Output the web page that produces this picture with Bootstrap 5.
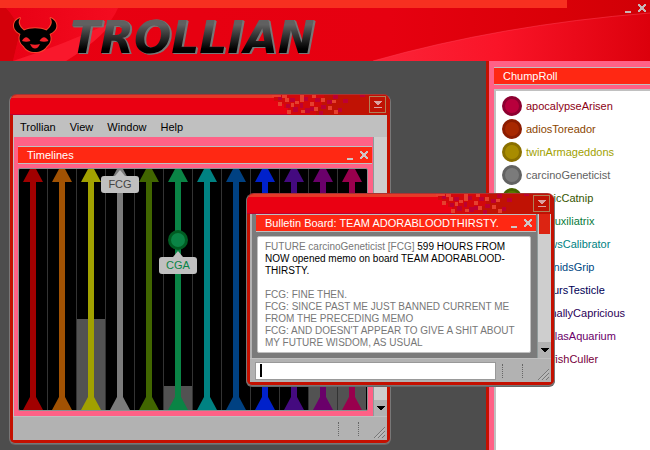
<!DOCTYPE html>
<html lang="en">
<head>
<meta charset="utf-8">
<meta name="viewport" content="width=device-width, initial-scale=1">
<title>Trollian</title>
<link rel="stylesheet" href="https://cdn.jsdelivr.net/npm/bootstrap@5.3.0/dist/css/bootstrap.min.css">
<style>
:root { --line: #c0c0c0; --face: #b2b2b2; --pink: #ff6186; --hot: #ff2813; --frame: #c41000; }
body { font: 11px/16px "Liberation Sans", Arial, sans-serif; background: #4d4d4d; color: #000; }
button { border: 0; padding: 0; background: none; color: inherit; line-height: 0; }
svg { display: block; }

.masthead { height: 61px; background: #e60010; border-bottom-right-radius: 6px; z-index: 1; }
.backdrop { inset: 0; width: 100%; height: 100%; }
.logo-text { font: italic bold 44px/44px "DejaVu Sans", sans-serif; color: transparent;
  background: linear-gradient(#606060 20%, #333 45%, #000 75%); -webkit-background-clip: text; background-clip: text;
  filter: drop-shadow(1px 0 0 #777) drop-shadow(1px 1px 0 #777); }
.masthead-btns { color: #c9b5b5; padding: 3px 3px 0 0; }

.roster { width: 164px; background: var(--pink); border-left: 3px solid var(--frame); padding: 6px 0 0 5px; }
.roster-list { margin-top: 4px; background: #fff; border: solid var(--line); border-width: 2px 0 0 2px; padding: 3px 0 0 6px; }
.chum { height: 23px; gap: 4px; color: var(--t); text-decoration: none; }
.chum::before { content: ""; flex: none; width: 20px; height: 20px; border-radius: 50%; background: var(--d); border: 3px solid var(--e); }

.strip { height: 18px; background: var(--hot); border: solid var(--line); border-width: 1px 0; color: #fff; padding: 0 3px 0 9px; }
.strip-btns { color: #d0c4c4; }

.win { border: 1px solid #777; border-top-color: #a33; border-radius: 8px 8px 6px 6px; background: var(--frame); padding: 0 3px 3px; overflow: hidden; box-shadow: 0 1px #666; }
.win-main { left: 9px; top: 33px; width: 382px; }
.win-memo { left: 246px; top: 132px; width: 309px; }
.win-bar { height: 20px; margin: 0 -3px; background: linear-gradient(#e63a28 3px, #ea0012 3px, #ea0012 19px, #c00030 19px); }
.win-tail { height: 20px; }
.win-toggle { right: 4px; top: 1px; width: 17px; height: 17px; border: 1px solid #b08058; color: #dba0a0; }

.menu-row { height: 22px; gap: 14px; padding: 0 7px; background: var(--line); }
.menu-row a { color: #000; text-decoration: none; line-height: 24px; }
.pane { padding: 9px 1px 5px 4px; background: var(--pink); border-left: 1px solid var(--line); }
.lanes { height: 243px; margin: 4px 4px 0 0; background: #000; border: 1px solid #8b9090; border-radius: 2px; }
.lane { border-right: 1px solid #333; background:
  linear-gradient(var(--c), var(--c)) center / 6px 100% no-repeat,
  linear-gradient(#525252, #525252) bottom / 100% var(--fill, 0) no-repeat; }
.lane:last-child { border-color: transparent; }
.lane::before, .lane::after { content: ""; width: 20px; height: 13px; background: var(--c); clip-path: polygon(35% 0, 65% 0, 100% 100%, 0 100%); }
.flag { left: 50%; width: 38px; height: 17px; margin-left: -19px; line-height: 17px; text-align: center; background: var(--line); border-radius: 3px; z-index: 1; }
.flag::before { content: ""; position: absolute; left: 14px; top: -6px; border: solid transparent; border-width: 0 5px 6px; border-bottom-color: var(--line); }
.knob { left: 50%; width: 20px; height: 20px; margin-left: -10px; border-radius: 50%; background: #0a8445; border: 3px solid #005c22; }

.scroller { width: 14px; background: #cecece; border-left: 1px solid #8f9a9a; }
.scroller button { height: 16px; background: var(--face); }
.scroller i { height: 20px; margin: 0 1px; background: #dc2412; }
.status { height: 24px; background: var(--face); border-top: 1px solid var(--line); padding: 2px 2px 2px 5px; gap: 19px; }
.grip { margin-left: -4px; }
.dots { height: 14px; border-left: 1px dotted #666; }
.memo-pane { background: #7b7b7b; padding: 0 1px 5px 4px; border-left: 2px solid var(--face); min-width: 0; }
.memo-text { margin: 4px 5px 0 1px; background: #fff; border: 1px solid var(--line); border-radius: 2px; padding: 4px 10px 3px 7px; color: #777; font-size: 10px; line-height: 12px; }
.memo-in { font-size: 11px; height: 18px; border: 1px solid #999; background: #fff; padding: 0 4px; margin-right: -13px; min-width: 0; }
.caret-mark { left: 10px; top: 5px; width: 2px; height: 13px; background: #000; }
</style>
<script src="https://cdn.jsdelivr.net/npm/bootstrap@5.3.0/dist/js/bootstrap.bundle.min.js"></script>
</head>
<body class="vh-100 overflow-hidden d-flex flex-column">

<svg width="0" height="0" class="position-absolute" aria-hidden="true">
  <symbol id="i-min" viewBox="0 0 10 10"><path d="M2 8h6v2H2z" fill="currentColor"/></symbol>
  <symbol id="i-close" viewBox="0 0 10 10"><path d="M1 1h2v1h1v1h2V2h1V1h2v2H8v1H7v2h1v1h1v2H7V8H6V7H4v1H3v1H1V7h1V6h1V4H2V3H1z" fill="currentColor"/></symbol>
  <symbol id="i-roll" viewBox="0 0 15 15"><path d="M4 4h8v1h-1v1h-1v1H9v1H7V7H6V6H5V5H4zM4 10h8v1H4z" fill="currentColor"/></symbol>
  <symbol id="i-down" viewBox="0 0 10 10"><path d="M1 3h8v1H8v1H7v1H6v1H4V6H3V5H2V4H1z" fill="#000"/></symbol>
  <symbol id="i-grip" viewBox="0 0 11 11"><path d="M0 11 11 0M4 11l7-7M8 11l3-3" stroke="#777" fill="none"/><path d="M1 11.500 11.500 1M5 11.500 11.500 5" stroke="#ccc" stroke-width=".6" fill="none"/></symbol>
  <symbol id="pixels" viewBox="0 0 126 20">
    <path d="M12 0H126V20H24V13h-4V9h-6V6h-4V2h2z" fill="#d3080b"/>
    <path d="M60 0H126V20H52V12h6V6h-4V3h6z" fill="#c01204"/>
    <path d="M14 2h4v3h-4zM26 3h5v4h-5zM22 9h4v4h-4zM29 12h5v5h-5zM36 8h3v5h-3zM40 2h4v4h-4zM41 13h5v5h-5zM51 3h5v4h-5zM46 12h4v4h-4zM57 10h5v4h-5zM63 5h5v4h-5zM69 0h5v4h-5zM55 16h4v4h-4zM74 13h4v4h-4zM79 4h5v4h-5zM96 0h5v2h-5z" fill="#bd0033"/>
    <path d="M8 0h9v2H8zM18 0h5v3h-5zM21 3h4v4h-4zM14 7h4v4h-4zM27 8h3v4h-3zM23 15h4v4h-4zM31 6h4v3h-4zM36 0h4v7h-4zM37 15h4v3h-4zM46 7h4v4h-4zM48 0h4v3h-4zM50 12h4v4h-4zM57 3h4v4h-4zM64 11h4v4h-4zM68 5h4v3h-4zM70 15h4v4h-4z" fill="#e6402e"/>
  </symbol>
</svg>

<header class="masthead position-relative d-flex justify-content-between align-items-start flex-shrink-0">
  <svg class="backdrop position-absolute" viewBox="0 0 650 61" preserveAspectRatio="none" aria-hidden="true">
    <defs>
      <linearGradient id="base"><stop offset="0" stop-color="#e80012"/><stop offset=".6" stop-color="#e60010"/><stop offset=".85" stop-color="#da0008"/><stop offset="1" stop-color="#d00006"/></linearGradient>
      <linearGradient id="sweep"><stop offset="0" stop-color="#fb2438"/><stop offset=".45" stop-color="#fa1428"/><stop offset="1" stop-color="#dc000c"/></linearGradient>
      <linearGradient id="glow"><stop offset="0" stop-color="#e80014"/><stop offset="1" stop-color="#f40c20"/></linearGradient>
    </defs>
    <path d="M0 0H650V61H0z" fill="url(#base)"/>
    <path d="M0 8H6Q16 18 20 32L13 61H0z" fill="#d4000a"/>
    <path d="M6 8H118Q108 32 66 61H13L20 32Q16 18 6 8z" fill="url(#glow)"/>
    <path d="M13 61Q65 44 112 22Q100 40 66 61z" fill="#f9182c"/>
    <path d="M373 61Q500 25 650 13V61z" fill="url(#sweep)"/>
    <path d="M373 61Q500 25 650 13" fill="none" stroke="#ff4055" stroke-opacity=".5"/>
    <path d="M0 0H567V8H0z" fill="#f73020"/>
  </svg>
  <div class="position-relative d-flex align-items-center ps-2 pt-3">
    <svg width="54" height="44" viewBox="8 16 54 44" role="img" aria-label="Troll mask">
      <path d="M20 18C14 20 12.500 26 15.500 30C17 32.500 19 33 20.500 34C18.500 38 19.500 43 24 46.500C26 50 30 52 35 52C40 52 44.500 50 46.500 46.500C51 43 51.500 38 49.500 34C51.500 33 53.500 32 55 30C58 26 56 20 50.500 18C53 22 52 26 46.500 30.500C40 27.500 30 27.500 24 30.500C18.500 26 17.500 22 20 18z" fill="#000" stroke="#f8452f" stroke-width="2" paint-order="stroke" stroke-linejoin="round"/>
      <path d="M22 41Q26 33.500 30.500 41Q26 42.500 22 41zM39.500 41Q44 33.500 48.500 41Q44 42.500 39.500 41zM30 44Q35 45.500 40 44Q38 48.500 35 48.500Q32 48.500 30 44z" fill="#f02028"/>
    </svg>
    <span class="logo-text ms-2">TROLLIAN</span>
  </div>
  <div class="masthead-btns position-relative d-flex gap-1">
    <button aria-label="Minimize"><svg width="10" height="10"><use href="#i-min"/></svg></button>
    <button aria-label="Close"><svg width="10" height="10"><use href="#i-close"/></svg></button>
  </div>
</header>

<main class="d-flex flex-fill position-relative">
  <section class="flex-fill" aria-label="Desktop">

    <article class="win win-main position-absolute">
      <div class="win-bar position-relative d-flex justify-content-end">
        <svg class="win-tail" width="126" height="20"><use href="#pixels"/></svg>
        <button class="win-toggle position-absolute" aria-label="Roll up"><svg width="15" height="15"><use href="#i-roll"/></svg></button>
      </div>
      <nav class="menu-row d-flex">
        <a href="#">Trollian</a><a href="#">View</a><a href="#">Window</a><a href="#">Help</a>
      </nav>
      <div class="d-flex">
        <div class="pane flex-fill">
          <div class="strip d-flex justify-content-between align-items-center">
            <span>Timelines</span>
            <span class="strip-btns d-flex gap-1">
              <button aria-label="Minimize timelines"><svg width="10" height="10"><use href="#i-min"/></svg></button>
              <button aria-label="Close timelines"><svg width="10" height="10"><use href="#i-close"/></svg></button>
            </span>
          </div>
          <div class="lanes d-flex">
            <div class="lane flex-fill position-relative d-flex flex-column justify-content-between align-items-center" style="--c:#a10000"></div>
            <div class="lane flex-fill position-relative d-flex flex-column justify-content-between align-items-center" style="--c:#a15203"></div>
            <div class="lane flex-fill position-relative d-flex flex-column justify-content-between align-items-center" style="--c:#a1a100;--fill:91px"></div>
            <div class="lane flex-fill position-relative d-flex flex-column justify-content-between align-items-center" style="--c:#7b7b7b"><span class="flag position-absolute" style="top:7px;color:#444">FCG</span></div>
            <div class="lane flex-fill position-relative d-flex flex-column justify-content-between align-items-center" style="--c:#416600"></div>
            <div class="lane flex-fill position-relative d-flex flex-column justify-content-between align-items-center" style="--c:#0a8445;--fill:24px"><span class="knob position-absolute" style="top:61px"></span><span class="flag position-absolute" style="top:88px;color:#0a8445">CGA</span></div>
            <div class="lane flex-fill position-relative d-flex flex-column justify-content-between align-items-center" style="--c:#008282"></div>
            <div class="lane flex-fill position-relative d-flex flex-column justify-content-between align-items-center" style="--c:#004182"></div>
            <div class="lane flex-fill position-relative d-flex flex-column justify-content-between align-items-center" style="--c:#0021cb"></div>
            <div class="lane flex-fill position-relative d-flex flex-column justify-content-between align-items-center" style="--c:#440a7f"></div>
            <div class="lane flex-fill position-relative d-flex flex-column justify-content-between align-items-center" style="--c:#6a006a;--fill:60px"></div>
            <div class="lane flex-fill position-relative d-flex flex-column justify-content-between align-items-center" style="--c:#99004d;--fill:60px"></div>
          </div>
        </div>
        <div class="scroller flex-shrink-0 d-flex flex-column justify-content-end">
          <button aria-label="Scroll down"><svg class="mx-auto" width="10" height="10"><use href="#i-down"/></svg></button>
        </div>
      </div>
      <div class="status d-flex justify-content-end align-items-center">
        <span class="dots"></span><span class="dots"></span>
        <svg class="grip align-self-end" width="11" height="11"><use href="#i-grip"/></svg>
      </div>
    </article>

    <article class="win win-memo position-absolute">
      <div class="win-bar position-relative d-flex justify-content-end">
        <svg class="win-tail" width="126" height="20"><use href="#pixels"/></svg>
        <button class="win-toggle position-absolute" aria-label="Roll up"><svg width="15" height="15"><use href="#i-roll"/></svg></button>
      </div>
      <div class="d-flex">
        <div class="memo-pane flex-fill">
          <div class="strip d-flex justify-content-between align-items-center">
            <span class="text-nowrap">Bulletin Board: TEAM ADORABLOODTHIRSTY.</span>
            <span class="strip-btns d-flex gap-1">
              <button aria-label="Minimize memo"><svg width="10" height="10"><use href="#i-min"/></svg></button>
              <button aria-label="Close memo"><svg width="10" height="10"><use href="#i-close"/></svg></button>
            </span>
          </div>
          <div class="memo-text">
            <span>FUTURE carcinoGeneticist [FCG]</span> <span class="text-black">599 HOURS FROM</span><br>
            <span class="text-black">NOW opened memo on board TEAM ADORABLOOD-<wbr>THIRSTY.</span><br><br>
            FCG: FINE THEN.<br>
            FCG: SINCE PAST ME JUST BANNED CURRENT ME FROM THE PRECEDING MEMO<br>
            FCG: AND DOESN'T APPEAR TO GIVE A SHIT ABOUT MY FUTURE WISDOM, AS USUAL
          </div>
        </div>
        <div class="scroller flex-shrink-0 d-flex flex-column justify-content-between">
          <i></i>
          <button aria-label="Scroll memo down"><svg class="mx-auto" width="10" height="10"><use href="#i-down"/></svg></button>
        </div>
      </div>
      <div class="status position-relative d-flex align-items-center">
        <input class="memo-in flex-fill" type="text" aria-label="Message">
        <span class="caret-mark position-absolute"></span>
        <span class="dots"></span><span class="dots"></span>
        <svg class="grip align-self-end flex-shrink-0" width="11" height="11"><use href="#i-grip"/></svg>
      </div>
    </article>
  </section>

  <aside class="roster flex-shrink-0 d-flex flex-column">
    <div class="strip">ChumpRoll</div>
    <div class="roster-list flex-fill d-flex flex-column">
      <a href="#" class="chum d-flex align-items-center" style="--t:#8c0014;--d:#b8003c;--e:#8c0030">apocalypseArisen</a>
      <a href="#" class="chum d-flex align-items-center" style="--t:#8c4600;--d:#a82800;--e:#8c1c00">adiosToreador</a>
      <a href="#" class="chum d-flex align-items-center" style="--t:#a1a100;--d:#a88c00;--e:#8a7000">twinArmageddons</a>
      <a href="#" class="chum d-flex align-items-center" style="--t:#626262;--d:#7b7b7b;--e:#626262">carcinoGeneticist</a>
      <a href="#" class="chum d-flex align-items-center" style="--t:#365600;--d:#5a7a00;--e:#466200">arsenicCatnip</a>
      <a href="#" class="chum d-flex align-items-center" style="--t:#087a3c;--d:#0a8445;--e:#005c22">grimAuxiliatrix</a>
      <a href="#" class="chum d-flex align-items-center" style="--t:#008282;--d:#008282;--e:#006262">gallowsCalibrator</a>
      <a href="#" class="chum d-flex align-items-center" style="--t:#004882;--d:#004182;--e:#003062">arachnidsGrip</a>
      <a href="#" class="chum d-flex align-items-center" style="--t:#000056;--d:#0021cb;--e:#001898">centaursTesticle</a>
      <a href="#" class="chum d-flex align-items-center" style="--t:#2b0057;--d:#440a7f;--e:#300060">terminallyCapricious</a>
      <a href="#" class="chum d-flex align-items-center" style="--t:#6a006a;--d:#6a006a;--e:#4c004c">caligulasAquarium</a>
      <a href="#" class="chum d-flex align-items-center" style="--t:#77003c;--d:#99004d;--e:#700038">cuttlefishCuller</a>
    </div>
  </aside>
</main>
</body>
</html>
